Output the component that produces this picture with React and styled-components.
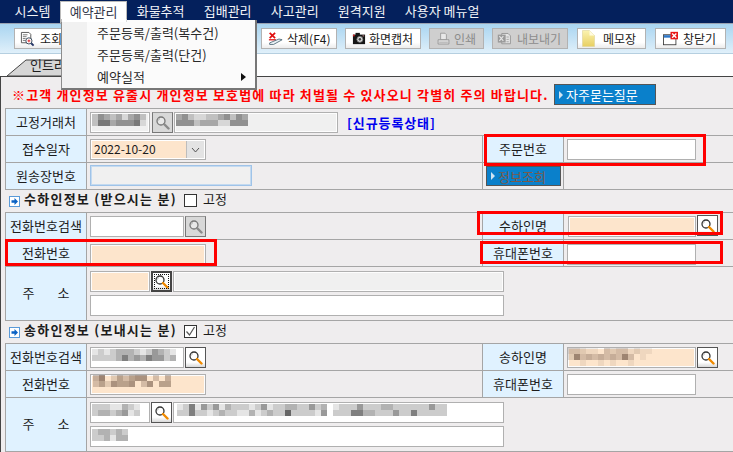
import React from "react";
import styled, { createGlobalStyle } from "styled-components";

const Global = createGlobalStyle`
  html, body { margin: 0; padding: 0; background: #fff; overflow: hidden; }
  body { font-family: "Noto Sans CJK KR", "Liberation Sans", sans-serif; font-size: 13px; color: #1c1c1c; }
  * { box-sizing: border-box; }
`;

const Page = styled.div`position: relative; width: 733px; height: 452px; overflow: hidden; background: #fff;`;

const NavBar = styled.nav`
  display: flex; height: 24px; padding: 1px 0 0 5px; background: #04205c; border-bottom: 1px solid #9aa3b3;
`;
const NavItem = styled.div`
  height: 22px; padding: 0 9.6px; line-height: 19px; white-space: nowrap;
  color: ${p => (p.$active ? "#33384a" : "#f2f4f8")};
  background: ${p => (p.$active ? "#fff" : "transparent")};
  ${p => p.$active && "border: 1px solid #bbb; border-bottom: 0; padding: 0 8.6px;"}
`;

const Menu = styled.div`
  position: absolute; left: 61px; top: 20px; width: 196px; height: 70px; padding: 2px 0;
  background: linear-gradient(90deg, #f1f1f1 0, #f1f1f1 25px, #fbfbfb 25px);
  border: 1px solid #8c8c8c; border-top: 0; border-right: 2px solid #777; border-bottom: 2px solid #777;
`;
const MenuItem = styled.div`
  position: relative; height: 22px; padding-left: 35px; line-height: 21px; color: #2a2a2a; white-space: nowrap;
`;
const MenuArrow = styled.span`
  position: absolute; right: 9px; top: 7px; width: 0; height: 0;
  border-left: 5px solid #111; border-top: 4px solid transparent; border-bottom: 4px solid transparent;
`;
const MenuCap = styled.div`position: absolute; left: 61px; top: 19px; width: 66px; height: 3px; background: #fff; border-left: 1px solid #bbb; border-right: 1px solid #ddd;`;

const Toolbar = styled.div`
  display: flex; height: 30px; padding: 4px 0 0 14px; gap: 8px;
  background: linear-gradient(180deg, #a9d5f1 0, #c4e2f5 50%, #e0f0fa 100%);
  border-bottom: 1px solid #b5cfe0;
`;
const ToolButton = styled.div`
  display: flex; align-items: center; gap: ${p => p.$gap ?? 4}px; width: ${p => p.$w}px; height: 21px; padding-left: ${p => p.$pl ?? 5}px;
  margin-right: ${p => p.$mr ?? 0}px; white-space: nowrap; font-size: 12px;
  color: ${p => (p.$off ? "#8c8c8c" : "#1a1a1a")};
  background: ${p => (p.$off ? "#cfcfcf" : "linear-gradient(180deg, #fff 0, #fff 70%, #ececec 100%)")};
  border: 1px solid #b2b2b2;
  svg { flex: none; }
`;

const TabStrip = styled.div`display: flex; height: 22px; background: #fff; padding-left: 7px; align-items: flex-end;`;
const Tab = styled.div`
  position: relative; width: 60px; height: 17px; padding-left: 23px; line-height: 11px; white-space: nowrap;
  svg { position: absolute; left: 0; top: 0; z-index: 0; }
  span { position: relative; }
`;

const Panel = styled.main`
  height: 376px; padding-left: 4px; background: #efedee; border-top: 1px solid #444; border-left: 1px solid #444;
`;
const Notice = styled.div`display: flex; align-items: flex-start; height: 31px; padding: 7px 0 0 7px;`;
const NoticeText = styled.strong`
  color: #f00; font-size: 13px; font-weight: 700; line-height: 14px; margin-top: 4px; letter-spacing: 1.15px; white-space: nowrap; width: 542px;
`;
const BlueButton = styled.div`
  display: flex; align-items: center; gap: 3px; width: ${p => p.$w}px; height: ${p => p.$h}px; padding-left: 4px; white-space: nowrap;
  background: #0a80cb; border: 1px solid #555; color: ${p => p.$dim ? "#7b5a4a" : "#fff"};
  &::before {
    content: ""; width: 0; height: 0; border-left: 4px solid #cfe4f2; border-top: 4px solid transparent; border-bottom: 4px solid transparent;
  }
`;

const Table = styled.section`
  display: grid; grid-template-columns: 81px 396px 81px 1fr;
  border-top: 1px solid #a5a5a5; border-left: 1px solid #a5a5a5;
`;
const Label = styled.div`
  display: flex; align-items: center; justify-content: center; height: ${p => p.$h ?? 27}px; white-space: nowrap;
  background: #e0f2ff; border-bottom: 1px solid #a5a5a5; border-right: 1px solid #a5a5a5;
  word-spacing: ${p => p.$ws ?? 0}px; padding-bottom: 2px;
`;
const Cell = styled.div`
  display: flex; align-items: flex-start; height: ${p => p.$h ?? 27}px; padding: ${p => p.$top ?? 3}px 0 0 ${p => p.$left ?? 3}px;
  border-bottom: 1px solid #a5a5a5; border-right: ${p => (p.$line ? "1px solid #a5a5a5" : "0")};
  grid-column: span ${p => p.$span ?? 1};
`;
const Stack = styled.div`display: flex; flex-direction: column; gap: 3px;`;
const Line = styled.div`display: flex; align-items: flex-start;`;
const Status = styled.strong`margin: 1px 0 0 9px; color: #0000ee; font-weight: 700; letter-spacing: 0.9px; white-space: nowrap;`;

const Field = styled.div`
  display: flex; align-items: flex-start; width: ${p => p.$w}px; height: 21px; padding: 0 0 0 ${p => p.$pl ?? 1}px; flex: none; overflow: hidden;
  background: ${p => ({ peach: "#fde5cc", gray: "#f0f0f0", white: "#fff" }[p.$kind ?? "white"])};
  border: 1px solid ${p => (p.$blue ? "#9fc3e8" : "#b0b0b0")};
  box-shadow: inset 0 0 0 1px ${p => (p.$blue ? "#c4daf0" : p.$kind === "white" || !p.$kind ? "#fff" : "#fdfdfd")};
`;
const Select = styled.div`
  display: flex; width: 116px; height: 21px; background: #fde5cc; border: 1px solid #b0b0b0; padding-left: 3px; line-height: 18px;
  box-shadow: inset 0 0 0 1px #fff; font-size: 12px;
`;
const SelectValue = styled.span`flex: 1;`;
const SelectArrow = styled.div`
  display: flex; align-items: center; justify-content: center; width: 18px; height: 17px; margin: 1px 1px 0 0;
  background: #e3e3e3; border-left: 1px solid #bdbdbd;
`;
const SearchButton = styled.div`
  display: flex; align-items: center; justify-content: center; flex: none; width: 21px; height: 21px; margin: ${p => p.$m ?? "0 1px 0 2px"};
  background: ${p => p.$off ? "#d8d8d8" : "linear-gradient(180deg,#fff 0,#fff 75%,#d8d8d8 100%)"};
  border: ${p => p.$focus ? "2px solid #444" : "1px solid #555"};
  ${p => p.$off && "border: 1px solid #777; border-top-color:#999;"}
  ${p => p.$focus && "outline: 1px dotted #111; outline-offset: -4px;"}
`;

const SectionHead = styled.header`display: flex; align-items: flex-start; height: 22px; padding: 3px 0 0 4px;`;
const SectionIcon = styled.svg`flex: none; margin: 3px 4px 0 0;`;
const SectionTitle = styled.strong`font-weight: 700; font-size: 13px; letter-spacing: 1.25px; width: 160px; white-space: nowrap; line-height: 14px; margin-top: -1px;`;
const Check = styled.div`
  display: flex; align-items: center; justify-content: center; width: 13px; height: 13px; margin: 1px 6px 0 0; background: #fff; border: 1px solid #333;
`;
const CheckLabel = styled.span`line-height: 14px; margin-top: -1px;`;

const Highlight = styled.div`
  position: absolute; left: ${p => p.$x}px; top: ${p => p.$y}px; width: ${p => p.$w}px; height: ${p => p.$h}px;
  border: 3px solid #f00; pointer-events: none;
`;

const Mosaic = ({ rows, dark = 0, x = 0, y = 0 }) => (
  <svg width={rows[0].length * 6} height={rows.length * 6} style={{ flex: "none", marginLeft: x, marginTop: y, display: "block" }}>
    {rows.flatMap((r, j) => [...r].map((c, i) => c === " " ? null : (
      <rect key={`${i}-${j}`} x={i * 6} y={j * 6} width="6" height="6" fill={dark ? "#5a4030" : "#000"} fillOpacity={Number(c) / (dark ? 12 : 10)} />
    )))}
  </svg>
);

const Glass = ({ gray }) => (
  <svg width="15" height="15" viewBox="0 0 15 15">
    <circle cx="6" cy="6" r="4" fill={gray ? "#e8e8e8" : "#fff"} stroke={gray ? "#777" : "#333"} strokeWidth="1.3" />
    <path d="M5 3.5a2.6 2.6 0 0 0-1.6 2" stroke={gray ? "#aaa" : "#bbb"} fill="none" />
    <path d="M9 9l4.5 4.5" stroke={gray ? "#8a8a8a" : "#f08a00"} strokeWidth="2.4" strokeLinecap="round" />
  </svg>
);

const IconQuery = () => (
  <svg width="15" height="16" viewBox="0 0 16 17">
    <path d="M1.5 1.5h8l2 2v9h-10z" fill="#fff" stroke="#555" />
    <path d="M3 4h5M3 6h4M3 8h3M3 10h3" stroke="#777" />
    <circle cx="9.5" cy="10.5" r="3.3" fill="#fff" stroke="#345" />
    <path d="M8 10.5h3M9.5 9v3" stroke="#d22" />
    <path d="M12 13l2.5 2.5" stroke="#236" strokeWidth="2" />
  </svg>
);
const IconDelete = () => (
  <svg width="15" height="14" viewBox="0 0 19 18">
    <path d="M2 1l7 7M9 1L2 8" stroke="#e01010" strokeWidth="2.2" />
    <path d="M1 10h9" stroke="#e01010" strokeWidth="1.6" />
    <path d="M2 14l12-5 4 1-11 6H2z" fill="#eaf2f6" stroke="#3c5a6a" />
  </svg>
);
const IconCamera = () => (
  <svg width="14" height="13" viewBox="0 0 16 15">
    <rect x="1" y="3" width="14" height="11" fill="#151515" />
    <rect x="4" y="1" width="5" height="3" fill="#151515" />
    <rect x="1" y="3" width="2" height="2" fill="#c22" />
    <circle cx="9" cy="8.5" r="3.4" fill="#ddd" stroke="#777" />
    <circle cx="9" cy="8.5" r="1.5" fill="#444" />
    <rect x="12" y="4" width="2" height="1" fill="#d99" />
  </svg>
);
const IconPrint = () => (
  <svg width="13" height="14" viewBox="0 0 18 19">
    <path d="M5 1.5h6l2 2v7H5z" fill="#e8e8e8" stroke="#8a8a8a" />
    <path d="M1.5 10.5h15v6h-15z" fill="#dcdcdc" stroke="#8a8a8a" />
    <path d="M3 14h12" stroke="#a5a5a5" />
  </svg>
);
const IconExport = () => (
  <svg width="15" height="14" viewBox="0 0 19 17">
    <path d="M6 1.5h8l3 3v10H6z" fill="#e4e4e4" stroke="#8a8a8a" />
    <path d="M1 3h10v10H1z" fill="#9a9a9a" />
    <path d="M3 5l5 6M8 5l-5 6" stroke="#e4e4e4" strokeWidth="1.5" />
    <path d="M12 6h3M12 9h3M12 12h3" stroke="#999" />
  </svg>
);
const IconMemo = () => (
  <svg width="13" height="17" viewBox="0 0 13 17">
    <defs>
      <linearGradient id="memo" x1="0" y1="0" x2="0" y2="1">
        <stop offset="0" stopColor="#fbf3b0" /><stop offset="1" stopColor="#e8cf62" />
      </linearGradient>
    </defs>
    <path d="M0.5 0.5h7l5 5v11H0.5z" fill="url(#memo)" stroke="#ddd39a" strokeWidth=".6" />
    <path d="M7.5 0.5v5h5z" fill="#fffbe0" />
  </svg>
);
const IconClose = () => (
  <svg width="17" height="15" viewBox="0 0 20 18">
    <rect x="1.5" y="4.5" width="15" height="12" fill="#fff" stroke="#333" />
    <rect x="2" y="5" width="14" height="3" fill="#2f78c8" />
    <rect x="10" y="1" width="9" height="9" fill="#e81818" />
    <path d="M12 3l5 5M17 3l-5 5" stroke="#fff" strokeWidth="1.6" />
  </svg>
);

const Gt = () => (
  <svg width="9" height="6" viewBox="0 0 9 6"><path d="M1 1l3.5 4L8 1" fill="none" stroke="#555" /></svg>
);
const Tick = () => (
  <svg width="11" height="11" viewBox="0 0 11 11"><path d="M1.5 5.5l3 3.5 5-8" fill="none" stroke="#555" strokeWidth="1.2" /></svg>
);
const BulletIcon = () => (
  <SectionIcon width="11" height="11" viewBox="0 0 11 11">
    <rect x=".5" y=".5" width="10" height="10" fill="#fff" stroke="#5a9ad8" />
    <path d="M2.5 4.2h3V2l3.5 3.5L5.5 9V6.8h-3z" fill="#0b62c4" />
  </SectionIcon>
);

const nav = ["시스템", "예약관리", "화물추적", "집배관리", "사고관리", "원격지원", "사용자 메뉴얼"];

export default function App() {
  return (
    <Page>
      <Global />
      <NavBar>
        {nav.map((n, i) => <NavItem key={n} $active={i === 1}>{n}</NavItem>)}
      </NavBar>
      <Toolbar>
        <ToolButton $w={239} $pl={5} $gap={5}><IconQuery /><span>조회</span></ToolButton>
        <ToolButton $w={76} $gap={4} $mr={0} $pl={6}><IconDelete /><span>삭제(F4)</span></ToolButton>
        <ToolButton $w={76} $pl={6} $gap={3}><IconCamera /><span>화면캡처</span></ToolButton>
        <ToolButton $w={55} $off $pl={7} $gap={4}><IconPrint /><span>인쇄</span></ToolButton>
        <ToolButton $w={76} $off $pl={4} $gap={5} $mr={1}><IconExport /><span>내보내기</span></ToolButton>
        <ToolButton $w={69} $pl={4} $gap={8} $mr={1}><IconMemo /><span>메모장</span></ToolButton>
        <ToolButton $w={71} $pl={6} $gap={4}><IconClose /><span>창닫기</span></ToolButton>
      </Toolbar>
      <TabStrip>
        <Tab>
          <svg width="60" height="17" viewBox="0 0 60 17"><path d="M0 17L19 1h41v16z" fill="#d6d6d6" stroke="#444" strokeWidth="1" /></svg>
          <span>인트라</span>
        </Tab>
      </TabStrip>
      <Panel>
        <Notice>
          <NoticeText>※고객 개인정보 유출시 개인정보 보호법에 따라 처벌될 수 있사오니 각별히 주의 바랍니다.</NoticeText>
          <BlueButton $w={102} $h={21}>자주묻는질문</BlueButton>
        </Notice>
        <Table>
          <Label>고정거래처</Label>
          <Cell $span={3}>
            <Field $w={60} $kind="gray"><Mosaic rows={["243231342", "255344451"]} y={1} /></Field>
            <SearchButton $off><Glass gray /></SearchButton>
            <Field $w={164} $kind="gray"><Mosaic rows={["342112234243", "444233311444"]} y={1} /></Field>
            <Status>[신규등록상태]</Status>
          </Cell>
          <Label>접수일자</Label>
          <Cell $line>
            <Select><SelectValue>2022-10-20</SelectValue><SelectArrow><Gt /></SelectArrow></Select>
          </Cell>
          <Label>주문번호</Label>
          <Cell><Field $w={129} /></Cell>
          <Label>원송장번호</Label>
          <Cell $line $top={2}><Field $w={162} $kind="gray" $blue /></Cell>
          <Cell $line $top={3} $left={3}><BlueButton $w={75} $h={20} $dim>정보조회</BlueButton></Cell>
          <Cell />
        </Table>

        <SectionHead>
          <BulletIcon />
          <SectionTitle>수하인정보 (받으시는 분)</SectionTitle>
          <Check />
          <CheckLabel>고정</CheckLabel>
        </SectionHead>
        <Table>
          <Label>전화번호검색</Label>
          <Cell $line>
            <Field $w={94} />
            <SearchButton $off $m="0 0 0 1px"><Glass gray /></SearchButton>
          </Cell>
          <Label>수하인명</Label>
          <Cell $left={4}>
            <Field $w={128} $kind="peach" />
            <SearchButton $m="-1px 0 0 1px"><Glass /></SearchButton>
          </Cell>
          <Label>전화번호</Label>
          <Cell $line $top={4}><Field $w={116} $kind="peach" /></Cell>
          <Label>휴대폰번호</Label>
          <Cell $top={4}><Field $w={129} /></Cell>
          <Label $h={54} $ws={20}>주 소</Label>
          <Cell $span={3} $h={54} $top={4}>
            <Stack>
              <Line>
                <Field $w={60} $kind="peach" />
                <SearchButton $focus $m="0 1px"><Glass /></SearchButton>
                <Field $w={331} $kind="gray" />
              </Line>
              <Field $w={414} />
            </Stack>
          </Cell>
        </Table>

        <SectionHead>
          <BulletIcon />
          <SectionTitle>송하인정보 (보내시는 분)</SectionTitle>
          <Check><Tick /></Check>
          <CheckLabel>고정</CheckLabel>
        </SectionHead>
        <Table>
          <Label>전화번호검색</Label>
          <Cell $line>
            <Field $w={94}><Mosaic rows={["12123332124321", "22223534354423"]} y={1} /></Field>
            <SearchButton $m="0 0 0 1px"><Glass /></SearchButton>
          </Cell>
          <Label>송하인명</Label>
          <Cell $left={3}>
            <Field $w={129} $kind="peach" $pl={0}><Mosaic rows={["33211 32331211 ", "27343434373 1  ", "  1  1 1  1    "]} dark={1} /></Field>
            <SearchButton $m="0 0 0 1px"><Glass /></SearchButton>
          </Cell>
          <Label>전화번호</Label>
          <Cell $line><Field $w={116} $kind="peach"><Mosaic rows={["47 253566 3 4 ", "3526556 36 55 "]} dark={1} x={1} /></Field></Cell>
          <Label>휴대폰번호</Label>
          <Cell><Field $w={129} /></Cell>
          <Label $h={54} $ws={20}>주 소</Label>
          <Cell $span={3} $h={54} $top={4}>
            <Stack>
              <Line>
                <Field $w={60}><Mosaic rows={["22211321", "23323412"]} y={1} /></Field>
                <SearchButton $m="0 1px"><Glass /></SearchButton>
                <Field $w={331} $pl={3}>
                  <Mosaic y={1} rows={[
                    "1251424132221241223322423 1222422233222222422",
                    "2252212322113123226222214 2225533222422522222"
                  ]} />
                </Field>
              </Line>
              <Field $w={414}><Mosaic rows={["233232", "223133"]} y={2} /></Field>
            </Stack>
          </Cell>
        </Table>
      </Panel>

      <Menu>
        <MenuItem>주문등록/출력(복수건)</MenuItem>
        <MenuItem>주문등록/출력(단건)</MenuItem>
        <MenuItem>예약실적<MenuArrow /></MenuItem>
      </Menu>
      <MenuCap />

      <Highlight $x={484} $y={134} $w={222} $h={32} />
      <Highlight $x={477} $y={211} $w={246} $h={24} />
      <Highlight $x={480} $y={241} $w={243} $h={23} />
      <Highlight $x={5} $y={239} $w={212} $h={27} />
    </Page>
  );
}
